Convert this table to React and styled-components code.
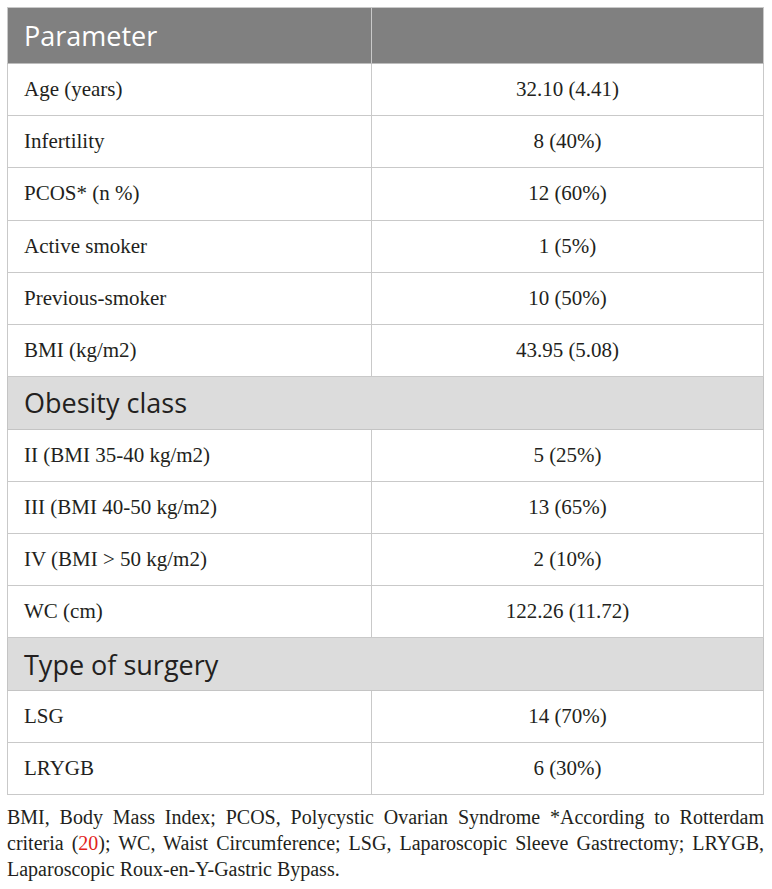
import React from "react";
import styled, { createGlobalStyle } from "styled-components";

const GlobalStyle = createGlobalStyle`
  html, body { margin: 0; padding: 0; background: #ffffff; }
  body { font-family: "Liberation Serif", "Times New Roman", serif; color: #231f20; }
`;

const Page = styled.div`
  padding: 7px 8px 0 7px;
  width: 772px;
  box-sizing: border-box;
`;

const Table = styled.table`
  width: 757px;
  border-collapse: collapse;
  border: 1px solid #c9c9c9;
  table-layout: fixed;
`;

const HeadCell = styled.th`
  height: 56px;
  padding: 0 16px;
  box-sizing: border-box;
  background: #808080;
  color: #ffffff;
  font-family: "Open Sans", "Noto Sans", sans-serif;
  font-weight: 400;
  font-size: 27px;
  text-align: left;
  border: 1px solid #c9c9c9;
  border-bottom-color: #bdbdbd;
`;

const SectionCell = styled.td`
  height: 52.5px;
  padding: 0 16px;
  box-sizing: border-box;
  background: #dcdcdc;
  color: #231f20;
  font-family: "Open Sans", "Noto Sans", sans-serif;
  font-size: 27px;
  text-align: left;
  border: 1px solid #c4c4c4;
`;

const Cell = styled.td`
  height: 52.2px;
  padding: 0 16px;
  box-sizing: border-box;
  font-family: "Liberation Serif", "Times New Roman", serif;
  font-size: 21px;
  color: #231f20;
  text-align: ${(p) => (p.$center ? "center" : "left")};
  border: 1px solid #c9c9c9;
`;

const Notes = styled.div`
  margin-top: 9px;
  width: 757px;
  font-family: "Liberation Serif", "Times New Roman", serif;
  font-size: 20px;
  line-height: 26px;
  color: #231f20;
`;

const NoteLine = styled.div`
  text-align: ${(p) => (p.$justify ? "justify" : "left")};
  text-align-last: ${(p) => (p.$justify ? "justify" : "left")};
  white-space: nowrap;
`;

const Ref = styled.span`
  color: #e2231a;
`;

const sections = [
  {
    title: null,
    rows: [
      ["Age (years)", "32.10 (4.41)"],
      ["Infertility", "8 (40%)"],
      ["PCOS* (n %)", "12 (60%)"],
      ["Active smoker", "1 (5%)"],
      ["Previous-smoker", "10 (50%)"],
      ["BMI (kg/m2)", "43.95 (5.08)"],
    ],
  },
  {
    title: "Obesity class",
    rows: [
      ["II (BMI 35-40 kg/m2)", "5 (25%)"],
      ["III (BMI 40-50 kg/m2)", "13 (65%)"],
      ["IV (BMI > 50 kg/m2)", "2 (10%)"],
      ["WC (cm)", "122.26 (11.72)"],
    ],
  },
  {
    title: "Type of surgery",
    rows: [
      ["LSG", "14 (70%)"],
      ["LRYGB", "6 (30%)"],
    ],
  },
];

export default function App() {
  return (
    <>
      <GlobalStyle />
      <Page>
        <Table>
          <colgroup>
            <col style={{ width: "364px" }} />
            <col />
          </colgroup>
          <thead>
            <tr>
              <HeadCell>Parameter</HeadCell>
              <HeadCell />
            </tr>
          </thead>
          <tbody>
            {sections.map((s, si) => (
              <React.Fragment key={si}>
                {s.title && (
                  <tr>
                    <SectionCell colSpan={2}>{s.title}</SectionCell>
                  </tr>
                )}
                {s.rows.map(([label, value]) => (
                  <tr key={label}>
                    <Cell>{label}</Cell>
                    <Cell $center>{value}</Cell>
                  </tr>
                ))}
              </React.Fragment>
            ))}
          </tbody>
        </Table>
        <Notes>
          <NoteLine $justify>
            BMI, Body Mass Index; PCOS, Polycystic Ovarian Syndrome *According to Rotterdam
          </NoteLine>
          <NoteLine $justify>
            criteria (<Ref>20</Ref>); WC, Waist Circumference; LSG, Laparoscopic Sleeve Gastrectomy; LRYGB,
          </NoteLine>
          <NoteLine>Laparoscopic Roux-en-Y-Gastric Bypass.</NoteLine>
        </Notes>
      </Page>
    </>
  );
}
